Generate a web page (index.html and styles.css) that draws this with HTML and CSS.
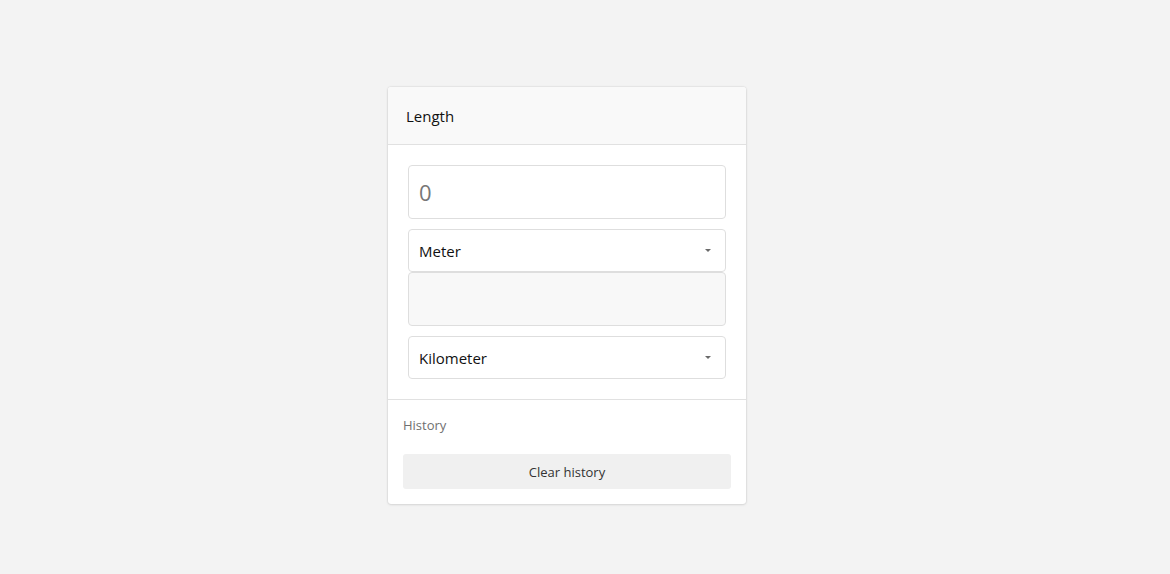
FILE: index.html
```html
<!DOCTYPE html>
<html lang="en">
<head>
<meta charset="utf-8">
<title>Length</title>
<link rel="stylesheet" href="styles.css">
</head>
<body>
<div class="page">
  <div class="card">
    <div class="card-header">Length</div>
    <div class="card-body">
      <div class="field input-field">0</div>
      <div class="field select-field"><span>Meter</span><span class="caret"></span></div>
      <div class="field output-field"></div>
      <div class="field select-field second"><span>Kilometer</span><span class="caret"></span></div>
    </div>
    <div class="card-footer">
      <div class="history-label">History</div>
      <div class="clear-btn">Clear history</div>
    </div>
  </div>
</div>
</body>
</html>
```
FILE: styles.css
```css
html, body {
  margin: 0;
  padding: 0;
  background: #f3f3f3;
  font-family: "Open Sans", "Noto Sans", sans-serif;
}
.page {
  display: flex;
  justify-content: flex-start;
  padding-top: 87px;
  padding-left: 388px;
  height: 574px;
  box-sizing: border-box;
}
.card {
  width: 358px;
  background: #fff;
  border-radius: 3px;
  box-shadow: 0 0 2px rgba(0,0,0,0.18), 0 1px 3px rgba(0,0,0,0.08);
  overflow: hidden;
  align-self: flex-start;
}
.card-header {
  height: 58px;
  background: #f9f9f9;
  border-bottom: 1px solid #e1e1e1;
  display: flex;
  align-items: center;
  padding-left: 18px;
  font-size: 15px;
  color: #111;
  padding-top: 1px;
  box-sizing: border-box;
}
.card-body {
  padding: 20px;
  display: flex;
  flex-direction: column;
  border-bottom: 1px solid #e1e1e1;
}
.field {
  border: 1px solid #dedede;
  border-radius: 4px;
  box-sizing: border-box;
  display: flex;
  align-items: center;
  padding: 0 10px;
}
.input-field {
  height: 54px;
  font-size: 22px;
  color: #777;
  padding-left: 10px;
}
.select-field {
  height: 43px;
  margin-top: 10px;
  font-size: 15px;
  color: #111;
  justify-content: space-between;
  padding-right: 14px;
}
.output-field {
  height: 54px;
  margin-top: 0;
  background: #f8f8f8;
}
.caret {
  width: 0;
  height: 0;
  border-left: 3px solid transparent;
  border-right: 3px solid transparent;
  border-top: 3px solid #6a6a6a;
}
.card-footer {
  padding: 15px;
  display: flex;
  flex-direction: column;
}
.history-label {
  font-size: 13px;
  color: #707070;
  line-height: 20px;
}
.clear-btn {
  margin-top: 19px;
  height: 35px;
  background: #f0f0f0;
  border-radius: 3px;
  display: flex;
  align-items: center;
  justify-content: center;
  font-size: 13px;
  color: #333;
}
```
